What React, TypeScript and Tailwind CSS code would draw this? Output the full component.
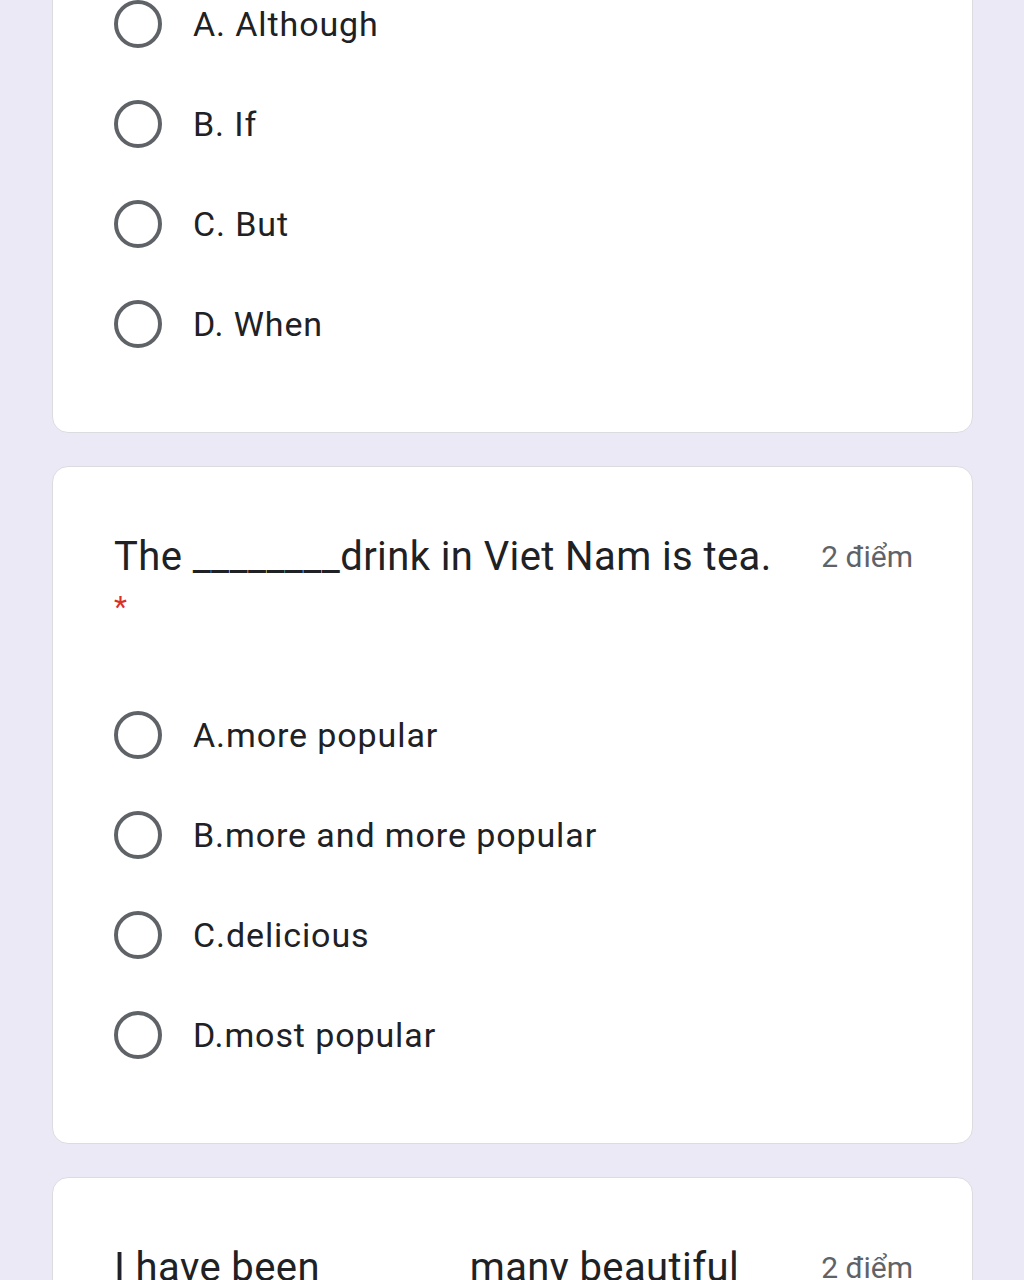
const first = ["A. Although", "B. If", "C. But", "D. When"];
const second = ["A.more popular", "B.more and more popular", "C.delicious", "D.most popular"];

function Radio({ label }: { label: string }) {
  return (
    <div className="flex h-[100px] items-center">
      <span className="h-[48px] w-[48px] shrink-0 rounded-full border-[4px] border-[#5f6368]" />
      <span className="ml-[31px] text-[34px] leading-none tracking-[0.9px] text-[#202124]">{label}</span>
    </div>
  );
}

function Title({ text }: { text: string }) {
  return (
    <div className="-mr-[2px] flex items-start justify-between">
      <div className="flex-1 pr-[30px]">
        <p className="text-[40px] leading-[48px] tracking-[0.4px] text-[#202124]">{text}</p>
        <p className="mt-[2px] text-[30px] leading-[48px] text-[#d93025]">*</p>
      </div>
      <span className="pt-[6px] text-[30px] leading-[36px] text-[#5f6368]">2 điểm</span>
    </div>
  );
}

export default function App() {
  return (
    <div className="min-h-screen overflow-hidden bg-[#ece9f6] font-['Roboto',sans-serif]">
      <div className="-mt-[60px] flex flex-col gap-[33px] pl-[52px] pr-[51px]">
        <div className="rounded-[16px] border border-[#dadce0] bg-white px-[61px] pb-[58px] pt-[33px]">
          {first.map((o) => (
            <Radio key={o} label={o} />
          ))}
        </div>

        <div className="rounded-[16px] border border-[#dadce0] bg-white px-[61px] pb-[58px] pt-[66px]">
          <Title text="The ________drink in Viet Nam is tea." />
          <div className="mt-[54px]">
            {second.map((o) => (
              <Radio key={o} label={o} />
            ))}
          </div>
        </div>

        <div className="rounded-[16px] border border-[#dadce0] bg-white px-[61px] pb-[60px] pt-[66px]">
          <Title text="I have been _______ many beautiful places in Viet Nam." />
        </div>
      </div>
    </div>
  );
}
